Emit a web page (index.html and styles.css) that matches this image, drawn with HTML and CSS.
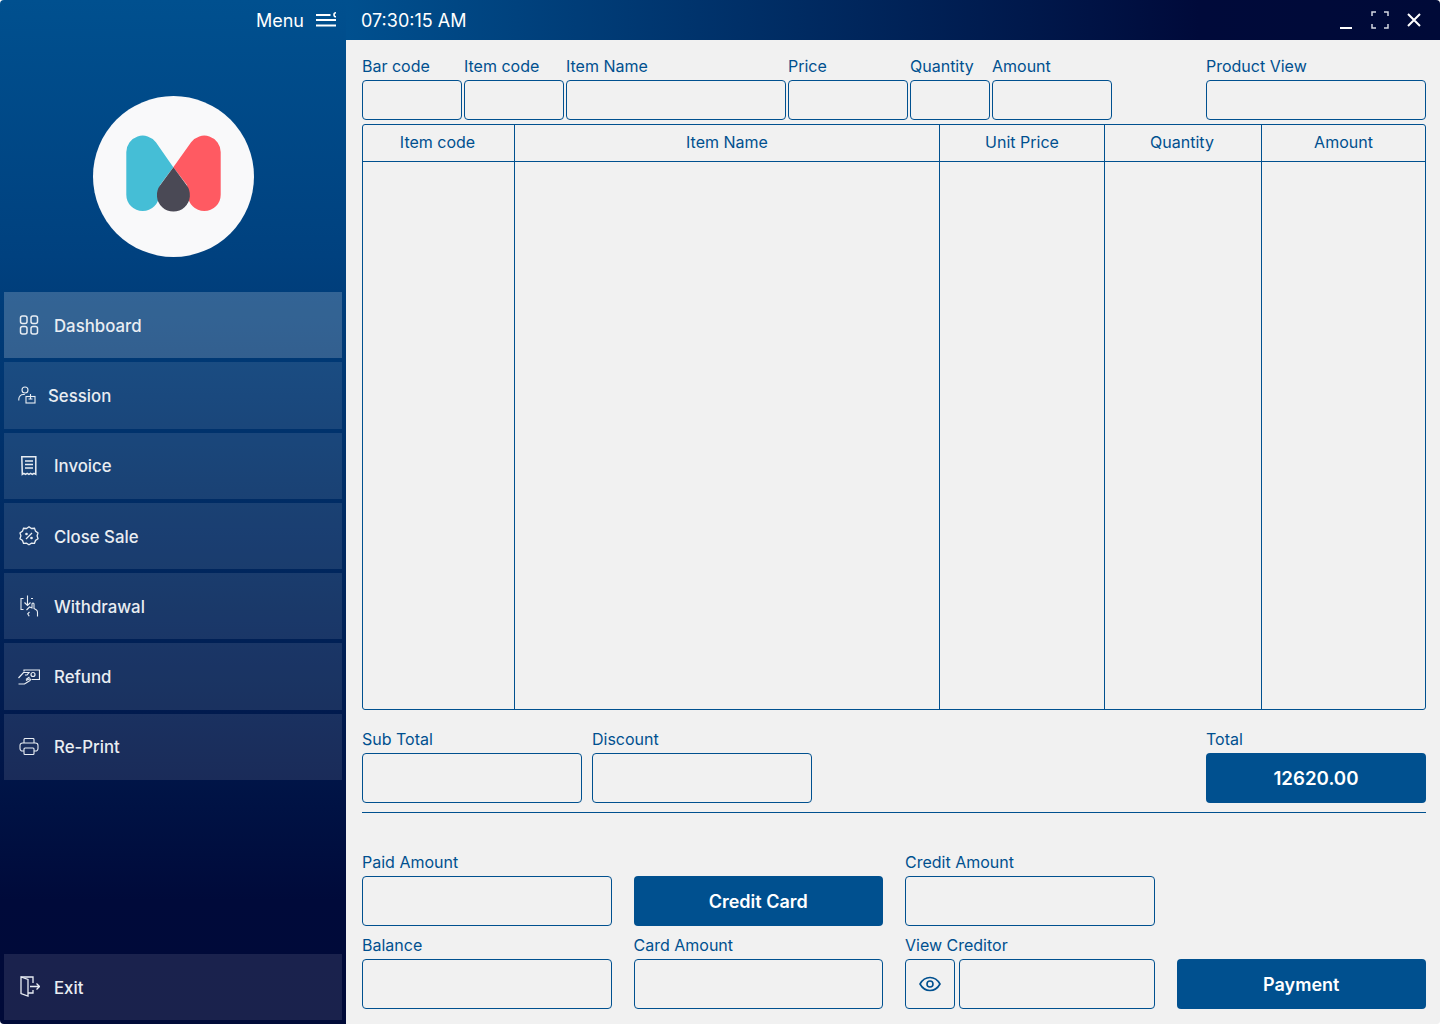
FILE: index.html
```html
<!DOCTYPE html>
<html lang="en">
<head>
<meta charset="UTF-8" />
<title>POS - Cashier</title>
<link rel="stylesheet" href="styles.css">
</head>
<body>

<div class="app">

  <aside class="sidebar">
    <div class="menu-bar">
      <span>Menu</span>
      <svg width="20" height="16" viewBox="0 0 20 16" fill="none" stroke="#fff" stroke-width="2">
        <path d="M0 3h14.500M0 8h20M0 13.500h20" />
        <path d="M20 0.800a2 2 0 0 0 0 4" stroke-width="1.600" />
      </svg>
    </div>

    <div class="logo">
      <svg width="161" height="161" viewBox="93 96 161 161">
        <circle cx="173.500" cy="176.500" r="80.500" fill="#f9f9fa" />
        <path fill="#45bed6" d="M126.300 152A16.400 16.400 0 0 1 155.900 142.300L173.300 167.300L160 185L159.100 194.700A16.400 16.400 0 0 1 126.300 194.700Z" />
        <path fill="#ff5a62" d="M220.700 152A16.400 16.400 0 0 0 191.100 142.300L173.300 167.300L187 185L187.900 194.700A16.400 16.400 0 0 0 220.700 194.700Z" />
        <path fill="#4a4955" d="M173.400 167.300L160.300 185A16.500 16.500 0 1 0 186.500 185Z" />
      </svg>
    </div>

    <nav class="nav">
      <a class="nav-item active">
        <svg class="nav-icon" width="20" height="20" viewBox="0 0 20 20" fill="none" stroke="#e8edf3" stroke-width="1.500">
          <rect x="1.500" y="1" width="6.500" height="7.500" rx="2" />
          <rect x="12" y="1" width="6.500" height="7.500" rx="2" />
          <rect x="1.500" y="11.500" width="6.500" height="7.500" rx="2" />
          <rect x="12" y="11.500" width="6.500" height="7.500" rx="2" />
        </svg>
        <span>Dashboard</span>
      </a>
      <a class="nav-item session">
        <svg class="nav-icon" width="18" height="18" viewBox="0 0 18 18" fill="none" stroke="#e8edf3" stroke-width="1.100">
          <circle cx="7" cy="4" r="3" />
          <path d="M0.800 14.500v-1.500a4.500 4.500 0 0 1 4.500-4.500h1.500" />
          <rect x="8" y="10.500" width="9" height="6.500" />
          <path d="M12.500 8v5M10.500 13h4" />
        </svg>
        <span>Session</span>
      </a>
      <a class="nav-item">
        <svg class="nav-icon" width="20" height="20" viewBox="0 0 20 20" fill="none" stroke="#e8edf3" stroke-width="1.500">
          <path d="M2.800 0.800h14v17.500l-1.800-1-1.700 1-1.700-1-1.700 1-1.700-1-1.700 1-1.700-1-1.500 1Z" />
          <path d="M6 5h8M6 8.500h8M6 12h8" />
        </svg>
        <span>Invoice</span>
      </a>
      <a class="nav-item">
        <svg class="nav-icon" width="20" height="20" viewBox="0 0 20 20" fill="none" stroke="#e8edf3" stroke-width="1.300">
          <path d="M10 0.800l2.500 1.700 3-.2 1 2.800 2.500 1.800-.9 2.900.9 2.900-2.500 1.800-1 2.800-3-.2-2.500 1.700-2.500-1.700-3 .2-1-2.800-2.500-1.800.9-2.900-.9-2.900 2.500-1.800 1-2.800 3 .2Z" />
          <path d="M7 13l6-6" />
          <circle cx="7.500" cy="8" r=".7" />
          <circle cx="12.500" cy="12" r=".7" />
        </svg>
        <span>Close Sale</span>
      </a>
      <a class="nav-item">
        <svg class="nav-icon" width="20" height="22" viewBox="0 0 20 22" fill="none" stroke="#e8edf3" stroke-width="1.100">
          <path d="M4.500 3.500H2v11h2.500M12 3.500h2" />
          <path d="M8.500 0.500v10M5.500 7.500l3 3 3-3" />
          <path d="M7.500 15l3-3 2.500 1V9c0-1.300 2-1.300 2 0v4.500l2.500 1.500c1 .7 1 1.500 1 2.500V21.500M10.500 17l-1.800 1.800 1.500 2.500" />
        </svg>
        <span>Withdrawal</span>
      </a>
      <a class="nav-item refund">
        <svg class="nav-icon" width="22" height="16" viewBox="0 0 22 16" fill="none" stroke="#e8edf3" stroke-width="1.200">
          <path d="M6 2.500V1h15.500v9.500H13.500" />
          <path d="M0.500 15h6l5.500-3.500c1-.8 0-2.200-1-1.500L8 11.500" />
          <path d="M0.500 9l5-5.500h5.500L9 6H7" />
          <circle cx="15" cy="5.500" r="2" />
          <path d="M8 10.500l3.500-2.500" />
        </svg>
        <span>Refund</span>
      </a>
      <a class="nav-item">
        <svg class="nav-icon" width="20" height="18" viewBox="0 0 20 18" fill="none" stroke="#e8edf3" stroke-width="1.100">
          <path d="M5 5V1.500a1 1 0 0 1 1-1h8a1 1 0 0 1 1 1V5" />
          <path d="M5 13H3.500a2.500 2.500 0 0 1-2.500-2.500V7.500A2.500 2.500 0 0 1 3.500 5h13A2.500 2.500 0 0 1 19 7.500v3a2.500 2.500 0 0 1-2.500 2.500H15" />
          <rect x="5" y="10" width="10" height="6.500" rx="1" />
        </svg>
        <span>Re-Print</span>
      </a>
    </nav>

    <a class="nav-item exit">
      <svg class="nav-icon" width="20" height="21" viewBox="0 0 20 21" fill="none" stroke="#e8edf3" stroke-width="1.300">
        <path d="M1 1h12v6M13 14v3H8" />
        <path d="M1 1l7 2.500V20L1 17.500Z" />
        <path d="M10 10.500h9.500M16.500 7.500l3 3-3 3" />
      </svg>
      <span>Exit</span>
    </a>
  </aside>

  <div class="main">
    <header class="titlebar">
      <span class="clock">07:30:15 AM</span>
      <div class="window-btns">
        <svg width="13" height="20" viewBox="0 0 13 20"><path d="M0 18h12" stroke="#fff" stroke-width="2" /></svg>
        <svg width="18" height="18" viewBox="0 0 18 18" fill="none" stroke="#d5d9e2" stroke-width="1.500">
          <path d="M1 5V1h4M13 1h4v4M17 13v4h-4M5 17H1v-4" />
        </svg>
        <svg width="14" height="14" viewBox="0 0 14 14" fill="none" stroke="#fff" stroke-width="2">
          <path d="M1 1l12 12M13 1L1 13" />
        </svg>
      </div>
    </header>

    <div class="content">
      <div class="entry-row">
        <label class="field w100">Bar code<input type="text" /></label>
        <label class="field w100">Item code<input type="text" /></label>
        <label class="field w220">Item Name<input type="text" /></label>
        <label class="field w120">Price<input type="text" /></label>
        <label class="field w80">Quantity<input type="text" /></label>
        <label class="field w120">Amount<input type="text" /></label>
        <label class="field w220 push">Product View<input type="text" /></label>
      </div>

      <div class="table-wrap">
        <table class="items">
          <colgroup>
            <col class="c1"><col class="c2"><col class="c3"><col class="c4"><col class="c5">
          </colgroup>
          <thead>
            <tr><th>Item code</th><th>Item Name</th><th>Unit Price</th><th>Quantity</th><th>Amount</th></tr>
          </thead>
          <tbody>
            <tr><td></td><td></td><td></td><td></td><td></td></tr>
          </tbody>
        </table>
      </div>

      <div class="totals-row">
        <label class="field w220 tall">Sub Total<input type="text" /></label>
        <label class="field w220 tall">Discount<input type="text" /></label>
        <div class="field w220 tall push">Total<div class="total-box">12620.00</div></div>
      </div>

      <hr class="divider" />

      <div class="pay-grid">
        <label class="field tall">Paid Amount<input type="text" /></label>
        <div class="field tall"><span>&nbsp;</span><button class="btn">Credit Card</button></div>
        <label class="field tall">Credit Amount<input type="text" /></label>
        <div></div>
        <label class="field tall">Balance<input type="text" /></label>
        <label class="field tall">Card Amount<input type="text" /></label>
        <div class="field tall">
          <span>View Creditor</span>
          <div class="creditor">
            <button class="eye-btn">
              <svg width="22" height="16" viewBox="0 0 22 16" fill="none" stroke="#00508f" stroke-width="1.600">
                <path d="M1 8c2.500-4.500 6-6.500 10-6.500S18.500 3.500 21 8c-2.500 4.500-6 6.500-10 6.500S3.500 12.500 1 8Z" />
                <circle cx="11" cy="8" r="3" />
              </svg>
            </button>
            <input type="text" />
          </div>
        </div>
        <div class="field tall"><span>&nbsp;</span><button class="btn">Payment</button></div>
      </div>
    </div>
  </div>

</div>

</body>
</html>
```

FILE: styles.css
```css
* {
  box-sizing: border-box;
}
body {
  margin: 0;
  background: #fff;
  font-family: 'Inter', 'Liberation Sans', sans-serif;
}
.app {
  width: 1440px;
  height: 1024px;
  display: flex;
  border-radius: 4px;
  overflow: hidden;
  background: #f1f1f1;
}

/* sidebar */
.sidebar {
  width: 346px;
  flex-shrink: 0;
  display: flex;
  flex-direction: column;
  padding: 0 4px 4px;
  background: linear-gradient(180deg, #00508f 0%, #00417f 25%, #000a3a 88%, #000a38 100%);
}
.menu-bar {
  height: 40px;
  display: flex;
  align-items: center;
  justify-content: flex-end;
  gap: 12px;
  padding-right: 6px;
  color: #fff;
  font-size: 18px;
}
.logo {
  height: 252px;
  padding-top: 56px;
  padding-left: 89px;
}
.logo svg {
  display: block;
}
.nav {
  display: flex;
  flex-direction: column;
  gap: 4px;
}
.nav-item {
  height: 66.300px;
  display: flex;
  align-items: center;
  gap: 15px;
  padding-left: 15px;
  background: rgba(255, 255, 255, 0.1);
  color: #e9edf2;
  font-size: 16.800px;
  font-weight: 500;
}
.nav-item span {
  padding-top: 1px;
}
.nav-item.active {
  background: rgba(255, 255, 255, 0.2);
}
.nav-item.session {
  gap: 12px;
  padding-left: 14px;
}
.nav-item.refund {
  gap: 14px;
  padding-left: 14px;
}
.nav-item.exit {
  margin-top: auto;
  padding-left: 16px;
  gap: 14px;
}
.nav-item.exit span {
  padding-top: 2px;
}
.nav-icon {
  flex-shrink: 0;
}

/* title bar */
.main {
  flex: 1;
  display: flex;
  flex-direction: column;
}
.titlebar {
  height: 40px;
  display: flex;
  align-items: center;
  justify-content: space-between;
  padding: 0 19px 0 15px;
  background: linear-gradient(90deg, #00508f 0%, #000a3a 78%, #000a38 100%);
  color: #fff;
  font-size: 18px;
}
.window-btns {
  display: flex;
  align-items: center;
  gap: 18px;
}
.window-btns svg {
  display: block;
}

/* form */
.content {
  flex: 1;
  padding: 16px 14px 0 16px;
  background: #f1f1f1;
}
.field {
  display: flex;
  flex-direction: column;
  gap: 4px;
  color: #00508f;
  font-size: 16px;
  line-height: 20px;
}
.field input,
.eye-btn {
  height: 40px;
  width: 100%;
  border: 1px solid #00508f;
  border-radius: 4px;
  background: transparent;
  padding: 0 8px;
}
.field.tall input {
  height: 50px;
}
.w80 { width: 80px; }
.w100 { width: 100px; }
.w120 { width: 120px; }
.w220 { width: 220px; }
.push {
  margin-left: auto;
}
.entry-row {
  display: flex;
  gap: 2px;
}

.table-wrap {
  height: 586px;
  margin-top: 4px;
  border: 1px solid #00508f;
  border-radius: 3px;
  overflow: hidden;
}
.items {
  width: 100%;
  height: 100%;
  table-layout: fixed;
  border-collapse: separate;
  border-spacing: 0;
}
.c1 { width: 152px; }
.c2 { width: 425px; }
.c3 { width: 165px; }
.c4 { width: 157px; }
.items th {
  height: 37px;
  padding: 0 0 2px 0;
  border-bottom: 1px solid #00508f;
  border-right: 1px solid #00508f;
  color: #00508f;
  font-size: 16px;
  font-weight: 400;
}
.items th:nth-child(1),
.items th:nth-child(4) {
  padding-right: 2px;
}
.items td {
  border-right: 1px solid #00508f;
}
.items th:last-child,
.items td:last-child {
  border-right: none;
}

.totals-row {
  display: flex;
  gap: 10px;
  margin-top: 19px;
}
.total-box {
  height: 50px;
  display: flex;
  align-items: center;
  justify-content: center;
  padding-top: 2px;
  border-radius: 4px;
  background: #00508f;
  color: #fff;
  font-size: 18.700px;
  font-weight: 600;
}
.divider {
  height: 1px;
  margin: 9px 0 0;
  border: none;
  background: #00508f;
}

.pay-grid {
  display: grid;
  grid-template-columns: repeat(4, 1fr);
  column-gap: 22px;
  row-gap: 9px;
  margin-top: 39px;
}
.btn {
  height: 50px;
  border: none;
  border-radius: 4px;
  background: #00508f;
  color: #fff;
  font-family: inherit;
  font-size: 18px;
  font-weight: 600;
}
.creditor {
  display: flex;
  gap: 4px;
}
.eye-btn {
  width: 50px;
  height: 50px;
  flex-shrink: 0;
  padding: 0;
  display: flex;
  align-items: center;
  justify-content: center;
}
```
